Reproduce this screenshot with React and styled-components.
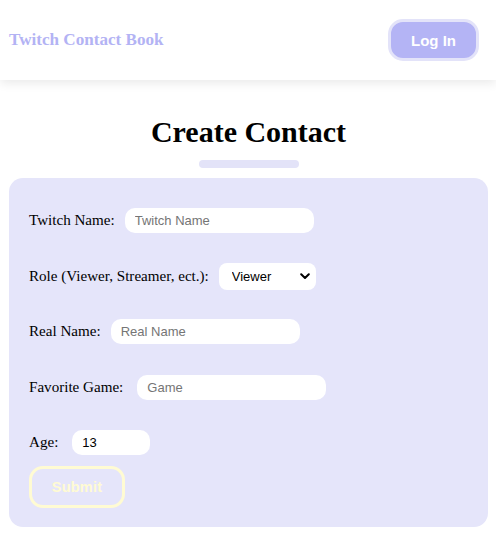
import React from "react";
import styled, { createGlobalStyle } from "styled-components";

const Global = createGlobalStyle`
  html, body { margin: 0; padding: 0; background: #ffffff; }
  body { font-family: "Liberation Serif", "Times New Roman", serif; color: #000; }
`;

const Header = styled.header`
  height: 80px;
  display: flex;
  align-items: center;
  justify-content: space-between;
  padding: 0 17px 0 9px;
  background: #ffffff;
  box-shadow: 0 3px 10px rgba(0, 0, 0, 0.09);
  position: relative;
`;

const Brand = styled.div`
  font-family: "Liberation Serif", "Times New Roman", serif;
  font-weight: bold;
  font-size: 17.1px;
  color: #b3b3f4;
`;

const LoginButton = styled.button`
  width: 91px;
  height: 42px;
  box-sizing: border-box;
  border: 3px solid #e3e3f9;
  border-radius: 15px;
  background: #b4b4f5;
  color: #ffffff;
  font-family: "Liberation Sans", Arial, sans-serif;
  font-weight: bold;
  font-size: 15px;
  padding: 0;
`;

const Main = styled.main`
  padding: 35px 8px 0 9px;
`;

const Title = styled.h1`
  margin: 0;
  text-align: center;
  font-size: 30px;
  font-weight: bold;
  line-height: 34.5px;
`;

const Bar = styled.div`
  width: 100px;
  height: 8px;
  border-radius: 4px;
  background: #e3e3f8;
  margin: 10px auto 10px;
`;

const Card = styled.form`
  background: #e5e5fa;
  border-radius: 14px;
  padding: 29px 20px 19px;
`;

const Row = styled.div`
  display: flex;
  align-items: center;
  height: 28px;
  margin-bottom: ${(p) => (p.$last ? "9px" : "27.5px")};
`;

const Label = styled.label`
  font-size: 15.1px;
  margin-right: ${(p) => p.$gap || 10}px;
  white-space: nowrap;
`;

const TextInput = styled.input`
  width: ${(p) => p.$w || 189}px;
  height: 25px;
  box-sizing: border-box;
  border: none;
  border-radius: 10px;
  background: #ffffff;
  padding: 0 10px;
  font-family: "Liberation Sans", Arial, sans-serif;
  font-size: 13px;
  color: #000;
  outline: none;
  &::placeholder { color: #757575; }
`;

const SelectWrap = styled.div`
  position: relative;
  width: 97px;
  height: 27px;
  background: #ffffff;
  border-radius: 8px;
`;

const Select = styled.select`
  appearance: none;
  width: 100%;
  height: 100%;
  border: none;
  background: transparent;
  border-radius: 8px;
  padding: 0 0 0 13px;
  font-family: "Liberation Sans", Arial, sans-serif;
  font-size: 13px;
  color: #000;
  outline: none;
`;

const Chevron = styled.svg`
  position: absolute;
  right: 6px;
  top: 10px;
  pointer-events: none;
`;

const Submit = styled.button`
  width: 96px;
  height: 42px;
  box-sizing: border-box;
  border: 3px solid #fffbd3;
  border-radius: 14px;
  background: transparent;
  color: #fffbd3;
  font-family: "Liberation Sans", Arial, sans-serif;
  font-weight: bold;
  font-size: 14.5px;
  letter-spacing: 0.2px;
  padding: 0;
`;

export default function App() {
  return (
    <>
      <Global />
      <Header>
        <Brand>Twitch Contact Book</Brand>
        <LoginButton>Log In</LoginButton>
      </Header>
      <Main>
        <Title>Create Contact</Title>
        <Bar />
        <Card onSubmit={(e) => e.preventDefault()}>
          <Row>
            <Label>Twitch Name:</Label>
            <TextInput placeholder="Twitch Name" />
          </Row>
          <Row>
            <Label>Role (Viewer, Streamer, ect.):</Label>
            <SelectWrap>
              <Select defaultValue="Viewer">
                <option>Viewer</option>
                <option>Streamer</option>
              </Select>
              <Chevron width="10" height="7" viewBox="0 0 10 7">
                <path d="M1.2 1.2 L5 5 L8.8 1.2" fill="none" stroke="#000" strokeWidth="2" strokeLinecap="round" strokeLinejoin="round" />
              </Chevron>
            </SelectWrap>
          </Row>
          <Row>
            <Label>Real Name:</Label>
            <TextInput placeholder="Real Name" />
          </Row>
          <Row>
            <Label $gap={14}>Favorite Game:</Label>
            <TextInput placeholder="Game" />
          </Row>
          <Row $last>
            <Label $gap={14}>Age:</Label>
            <TextInput type="text" defaultValue="13" $w={78} />
          </Row>
          <Submit type="submit">Submit</Submit>
        </Card>
      </Main>
    </>
  );
}
